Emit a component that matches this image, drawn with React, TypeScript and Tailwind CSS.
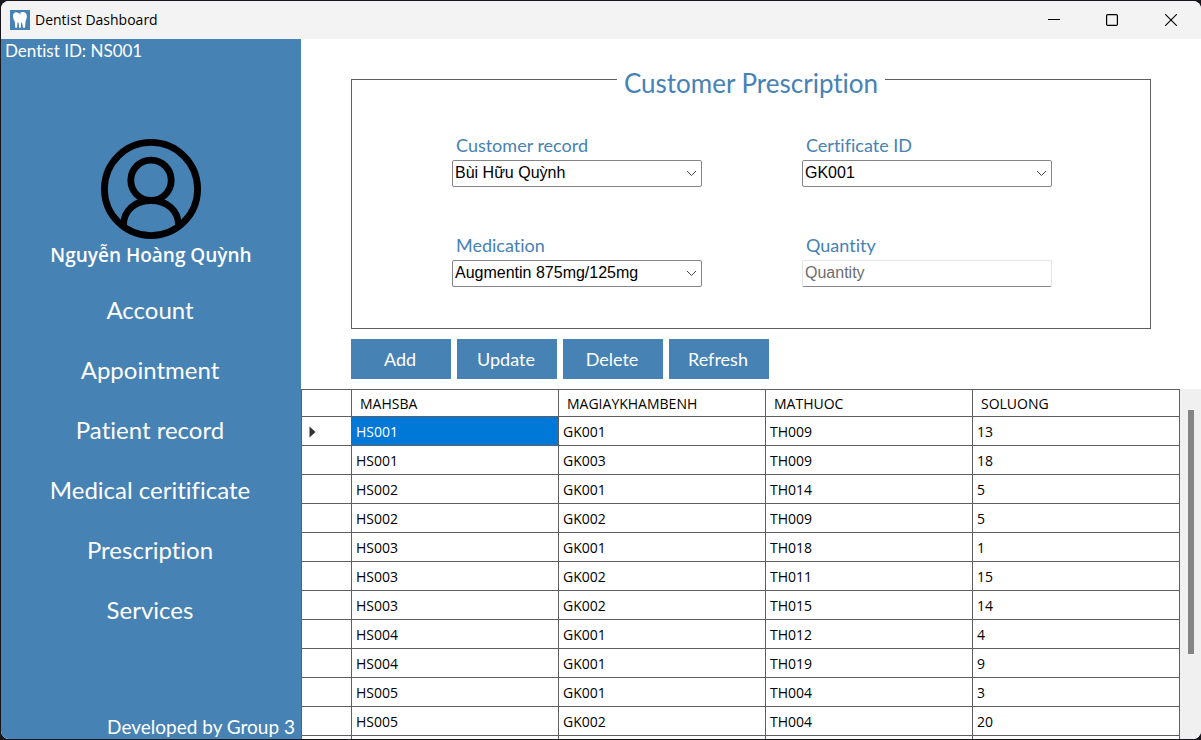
import React, { useId, type ReactNode } from "react";

const navItems = [
  "Account",
  "Appointment",
  "Patient record",
  "Medical ceritificate",
  "Prescription",
  "Services",
];

const columns = ["MAHSBA", "MAGIAYKHAMBENH", "MATHUOC", "SOLUONG"];

const rows: string[][] = [
  ["HS001", "GK001", "TH009", "13"],
  ["HS001", "GK003", "TH009", "18"],
  ["HS002", "GK001", "TH014", "5"],
  ["HS002", "GK002", "TH009", "5"],
  ["HS003", "GK001", "TH018", "1"],
  ["HS003", "GK002", "TH011", "15"],
  ["HS003", "GK002", "TH015", "14"],
  ["HS004", "GK001", "TH012", "4"],
  ["HS004", "GK001", "TH019", "9"],
  ["HS005", "GK001", "TH004", "3"],
  ["HS005", "GK002", "TH004", "20"],
  ["", "", "", ""],
];

function ToothIcon() {
  return (
    <svg className="size-5" viewBox="0 0 20 20" aria-hidden="true">
      <rect width="20" height="20" fill="#4682b4" />
      <path
        d="M3.2 4.4C4.3 2 6.6 1.8 8.4 2.9L11 4.4L10 2.8C12.2 1.6 15.2 1.7 16.4 4.2C17.5 6.6 16.4 9.1 15.6 11L15 17.7H13.1L12 12.4H11.2L10.9 17.7H9.1L8.6 12.4H7.5L7 17.7H5.3L4.7 11.2C3.6 9 2.3 6.9 3.2 4.4Z"
        fill="#fff"
      />
    </svg>
  );
}

function Avatar() {
  return (
    <svg
      className="size-[100px]"
      viewBox="0 0 100 100"
      fill="none"
      stroke="#000"
      strokeWidth="6.8"
      aria-hidden="true"
    >
      <circle cx="50" cy="50" r="46.6" />
      <circle cx="50" cy="41.3" r="20.2" />
      <path d="M22.4 87C22.4 71 34.5 61.5 50 61.5S77.6 71 77.6 87" />
    </svg>
  );
}

function TitleBar() {
  return (
    <header className="flex h-[38px] shrink-0 items-center bg-[#f3f3f3] pl-[9px] font-['Open_Sans',sans-serif]">
      <ToothIcon />
      <h1 className="ml-[5px] flex-1 text-sm text-black">Dentist Dashboard</h1>
      <div className="flex h-full">
        <button aria-label="Minimize" className="flex w-[58px] items-center justify-center">
          <svg className="size-3" viewBox="0 0 12 12" stroke="#000" aria-hidden="true">
            <path d="M0 5.5H12" />
          </svg>
        </button>
        <button aria-label="Maximize" className="flex w-[58px] items-center justify-center">
          <svg className="size-3" viewBox="0 0 12 12" fill="none" stroke="#000" strokeWidth="1.2" aria-hidden="true">
            <rect x="0.6" y="0.6" width="10.8" height="10.8" rx="1.2" />
          </svg>
        </button>
        <button aria-label="Close" className="flex w-[60px] items-center justify-center">
          <svg className="size-3" viewBox="0 0 12 12" stroke="#000" strokeWidth="1.1" aria-hidden="true">
            <path d="M0 0L12 12M12 0L0 12" />
          </svg>
        </button>
      </div>
    </header>
  );
}

function Sidebar() {
  return (
    <aside className="flex w-[300px] shrink-0 flex-col bg-[#4682b4] text-white">
      <p className="pl-1 text-[17px] leading-6">Dentist ID: NS001</p>
      <div className="mt-[76px] flex flex-col items-center">
        <Avatar />
        <p className="font-['Open_Sans',sans-serif] text-[19px] leading-8 font-semibold">
          Nguyễn Hoàng Quỳnh
        </p>
      </div>
      <nav className="mt-[9px] flex flex-col pr-[2px]">
        {navItems.map((item) => (
          <a key={item} href="#" className="flex h-[60px] items-center justify-center text-2xl">
            {item}
          </a>
        ))}
      </nav>
      <p className="mt-auto pr-[6px] text-right text-[19px] leading-6">Developed by Group 3</p>
    </aside>
  );
}

function Field({ label, children }: { label: string; children: (id: string) => ReactNode }) {
  const id = useId();
  return (
    <div className="flex flex-col gap-[3px]">
      <label htmlFor={id} className="pl-1 text-[18px] leading-6 text-[#4682b4]">
        {label}
      </label>
      {children(id)}
    </div>
  );
}

function SelectField({ label, value }: { label: string; value: string }) {
  return (
    <Field label={label}>
      {(id) => (
        <div className="relative">
          <select
            id={id}
            className="block h-[27px] w-full appearance-none rounded-[2px] border border-[#858585] bg-white pr-6 pb-[2px] pl-[2px] font-['Liberation_Sans',sans-serif] text-base leading-6 text-black"
          >
            <option>{value}</option>
          </select>
          <svg
            className="pointer-events-none absolute top-[10px] right-[5px] h-[7px] w-[11px]"
            viewBox="0 0 11 7"
            fill="none"
            stroke="#444"
            aria-hidden="true"
          >
            <path d="M1 1L5.5 5.5L10 1" />
          </svg>
        </div>
      )}
    </Field>
  );
}

function PrescriptionForm() {
  return (
    <fieldset className="mx-[50px] border border-[#5f5f5f] pb-[41px]">
      <legend className="mx-auto px-[7px] pt-2 text-[26px] leading-8 text-[#4682b4]">
        Customer Prescription
      </legend>
      <div className="mt-[34px] grid grid-cols-[250px_250px] justify-center gap-x-[100px] gap-y-[46px] pl-[2px]">
        <SelectField label="Customer record" value="Bùi Hữu Quỳnh" />
        <SelectField label="Certificate ID" value="GK001" />
        <SelectField label="Medication" value="Augmentin 875mg/125mg" />
        <Field label="Quantity">
          {(id) => (
            <input
              id={id}
              placeholder="Quantity"
              className="h-[27px] rounded-[2px] border border-[#e5e5e5] border-b-[#858585] pb-[2px] pl-[2px] font-['Liberation_Sans',sans-serif] text-base placeholder:text-[#6d6d6d]"
            />
          )}
        </Field>
      </div>
    </fieldset>
  );
}

function RecordsTable() {
  return (
    <div className="mt-[10px] flex min-h-0 flex-1">
      <div className="min-w-0 flex-1 overflow-hidden border-l border-[#5f5f5f]">
        <table className="w-full table-fixed border-separate border-spacing-0 border-t border-[#5f5f5f] text-left font-['Open_Sans',sans-serif] text-sm text-black">
          <colgroup>
            <col className="w-[50px]" />
            <col />
            <col />
            <col />
            <col />
          </colgroup>
          <thead>
            <tr className="h-[27px]">
              <td className="border-r border-b border-[#5f5f5f]" />
              {columns.map((name) => (
                <th key={name} className="border-r border-b border-[#5f5f5f] p-0 pt-[2px] pl-2 font-normal">
                  {name}
                </th>
              ))}
            </tr>
          </thead>
          <tbody>
            {rows.map((row, r) => (
              <tr key={r} className="h-[29px]">
                <td className="border-r border-b border-[#5f5f5f] p-0 pt-[2px] pl-[7px]">
                  {r === 0 && (
                    <svg className="h-3 w-[7px]" viewBox="0 0 7 12" aria-hidden="true">
                      <path d="M0.5 0.5L6.500 6L0.5 11.5Z" fill="#333" />
                    </svg>
                  )}
                </td>
                {row.map((cell, c) => (
                  <td
                    key={c}
                    className={
                      r === 0 && c === 0
                        ? "border-r border-b border-[#5f5f5f] bg-[#0078d7] p-0 pt-[2px] pl-1 text-white"
                        : "border-r border-b border-[#5f5f5f] p-0 pt-[2px] pl-1"
                    }
                  >
                    {cell}
                  </td>
                ))}
              </tr>
            ))}
          </tbody>
        </table>
      </div>
      <div className="flex w-[21px] shrink-0 flex-col items-center bg-[#f0f0f0] pt-[21px]">
        <div className="h-[244px] w-[6px] bg-[#858585]" />
      </div>
    </div>
  );
}

export default function App() {
  return (
    <div className="h-screen bg-[#16161c] pt-px pb-px pl-px font-['Lato',sans-serif] [font-variant-ligatures:none]">
      <div className="flex h-full flex-col overflow-hidden rounded-lg bg-white">
        <TitleBar />
        <div className="flex min-h-0 flex-1">
          <Sidebar />
          <main className="flex min-w-0 flex-1 flex-col pt-5">
            <PrescriptionForm />
            <div className="mx-[50px] mt-[10px] flex gap-[6px]">
              {["Add", "Update", "Delete", "Refresh"].map((name) => (
                <button key={name} className="h-10 w-[100px] bg-[#4682b4] pr-[2px] text-[18px] text-white">
                  {name}
                </button>
              ))}
            </div>
            <RecordsTable />
          </main>
        </div>
      </div>
    </div>
  );
}
